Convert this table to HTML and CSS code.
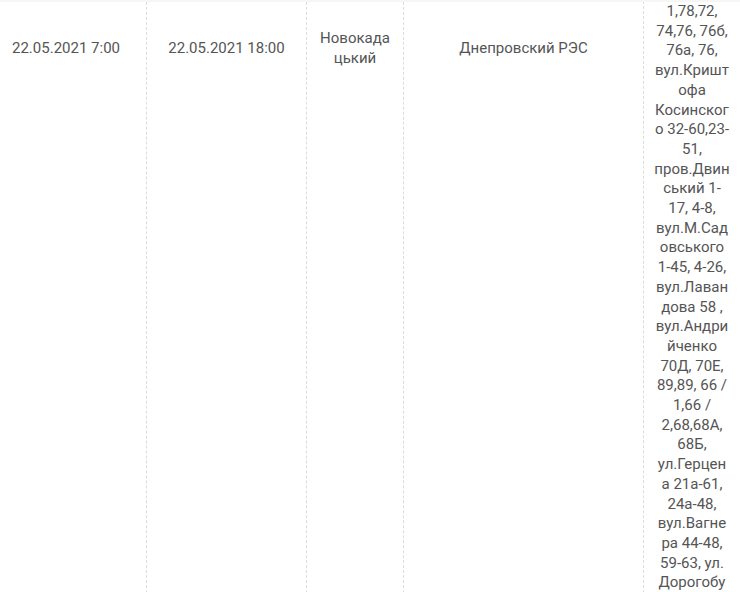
FILE: index.html
```
<!DOCTYPE html>
<html lang="ru">
<head>
	<meta charset="UTF-8">
	<title>Графік відключень</title>
	<link rel="stylesheet" href="styles.css">
</head>
<body>
<div class="table">
	<div class="row">
		<div class="cell c1"><div class="mid">22.05.2021 7:00</div></div>
		<div class="cell c2"><div class="mid">22.05.2021 18:00</div></div>
		<div class="cell c3"><div class="mid">Новокадацький</div></div>
		<div class="cell c4"><div class="mid">Днепровский РЭС</div></div>
		<div class="cell c5">1,78,72, 74,76, 76б, 76а, 76, вул.Криштофа Косинского 32-60,23-51, пров.Двинський 1-17, 4-8, вул.М.Садовського 1-45, 4-26, вул.Лавандова 58 , вул.Андрийченко 70Д, 70Е, 89,89, 66 / 1,66 / 2,68,68А, 68Б, ул.Герцена 21а-61, 24а-48, вул.Вагнера 44-48, 59-63, ул. Дорогобужская</div>
	</div>
</div>
</body>
</html>
```

FILE: styles.css
```
html,body{margin:0;padding:0;background:#fff}
body{font-family:Roboto,"Noto Sans",sans-serif;font-size:15px;line-height:19.7px;color:#555}
.table{height:592px;overflow:hidden;border-top:2px solid #f6f6f6;box-sizing:border-box}
.row{display:grid;grid-template-columns:146px 160px 97px 240px 97px;height:100%}
.cell{border-left:1px dashed #dcdcdc;text-align:center;box-sizing:border-box}
.c1{border-left:0;text-align:left;padding-left:12px}
.mid{height:93px;display:flex;align-items:center;justify-content:center}
.c1 .mid{justify-content:flex-start}
.c3{padding:0 10px}
.c3 .mid{overflow-wrap:anywhere}
.c5{padding:1px 10px 0;overflow-wrap:anywhere;margin-top:-1px}
```
